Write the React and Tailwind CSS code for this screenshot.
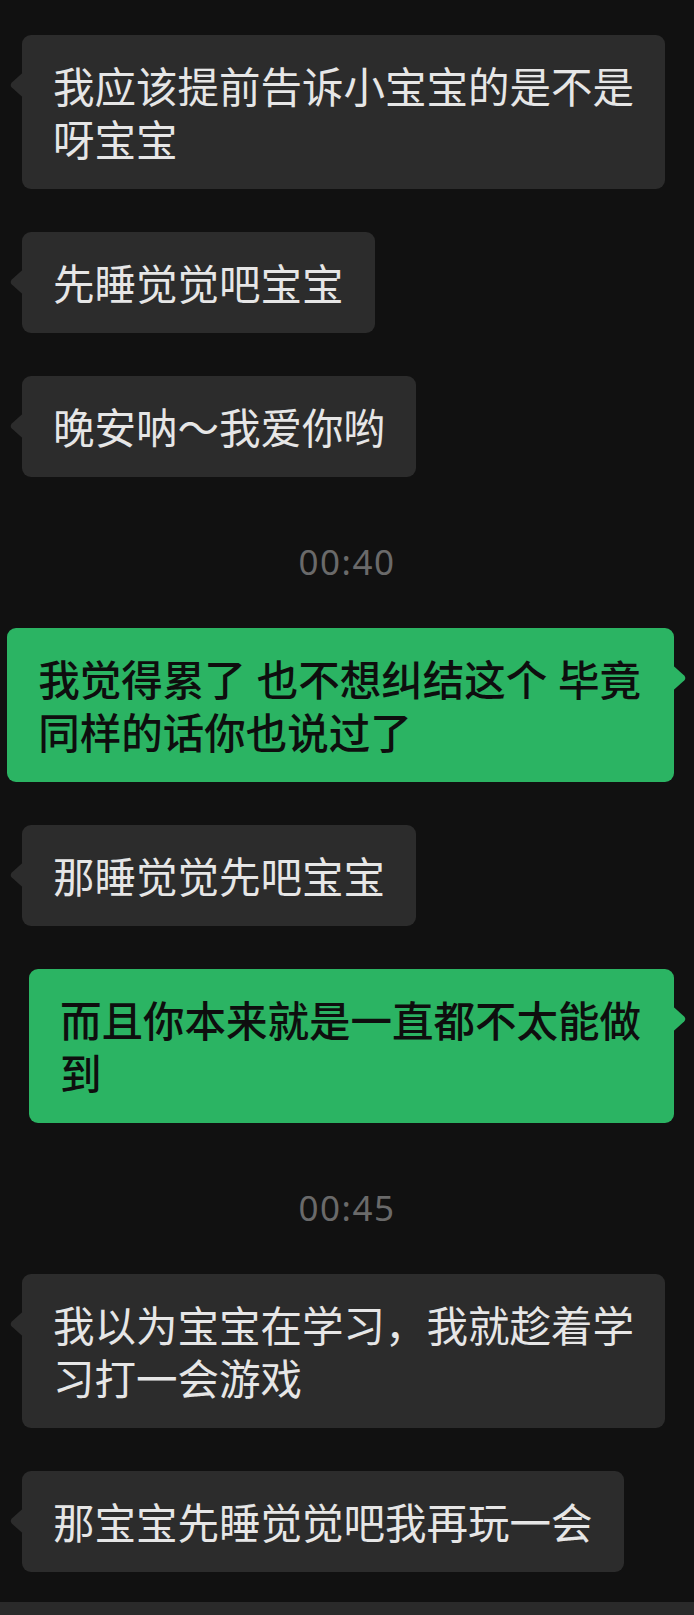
const CJK = { fontFamily: '"Noto Sans CJK SC", "Noto Sans", sans-serif' }

const MESSAGES = [
  { type: 'in', lines: ['我应该提前告诉小宝宝的是不是', '呀宝宝'] },
  { type: 'in', lines: ['先睡觉觉吧宝宝'] },
  { type: 'in', lines: ['晚安呐～我爱你哟'] },
  { type: 'time', text: '00:40' },
  { type: 'out', lines: ['我觉得累了 也不想纠结这个 毕竟', '同样的话你也说过了'] },
  { type: 'in', lines: ['那睡觉觉先吧宝宝'] },
  { type: 'out', lines: ['而且你本来就是一直都不太能做', '到'] },
  { type: 'time', text: '00:45' },
  { type: 'in', lines: ['我以为宝宝在学习，我就趁着学', '习打一会游戏'] },
  { type: 'in', lines: ['那宝宝先睡觉觉吧我再玩一会'] },
]

function Tail({ side, color }) {
  const left = side === 'left'
  return (
    <svg
      width="14" height="26" viewBox="0 0 14 26"
      className={`absolute top-[37px] ${left ? 'left-[-13px]' : 'right-[-13px] -scale-x-100'}`}
    >
      <path d="M14 0.5 L14 25.5 L2.8 15.6 Q0.6 13 2.8 10.4 Z" fill={color} />
    </svg>
  )
}

function Bubble({ msg }) {
  if (msg.type === 'time') {
    return (
      <div
        className="mt-[22px] mb-[3px] text-center text-[35px] leading-[40px] tracking-[1.5px] text-[#6a6a6a]"
        style={{ fontFamily: '"Noto Sans", sans-serif' }}
      >
        {msg.text}
      </div>
    )
  }
  const incoming = msg.type === 'in'
  return (
    <div className={`flex ${incoming ? 'justify-start pl-[22px]' : 'justify-end pr-[20px]'}`}>
      <div
        className={`relative shrink-0 rounded-[9px] py-[24px] text-[41.5px] leading-[53px] ${
          incoming
            ? 'bg-[#2c2c2c] px-[31px] text-[#e6e6e6]'
            : 'bg-[#2bb463] pl-[31px] pr-[33px] font-medium text-[#0e0e0e]'
        }`}
        style={CJK}
      >
        <Tail side={incoming ? 'left' : 'right'} color={incoming ? '#2c2c2c' : '#2bb463'} />
        {msg.lines.map((line, i) => (
          <span key={i} className="block whitespace-pre [word-spacing:1.5px]">
            {line}
          </span>
        ))}
      </div>
    </div>
  )
}

export default function App() {
  return (
    <div className="flex min-h-[1615px] w-[694px] flex-col bg-[#111111]">
      <div className="flex flex-1 flex-col gap-[43px] pt-[35px] pb-[30px]">
        {MESSAGES.map((msg, i) => (
          <Bubble key={i} msg={msg} />
        ))}
      </div>
      <div className="h-[15px] bg-[#2a2a2a]" />
    </div>
  )
}
